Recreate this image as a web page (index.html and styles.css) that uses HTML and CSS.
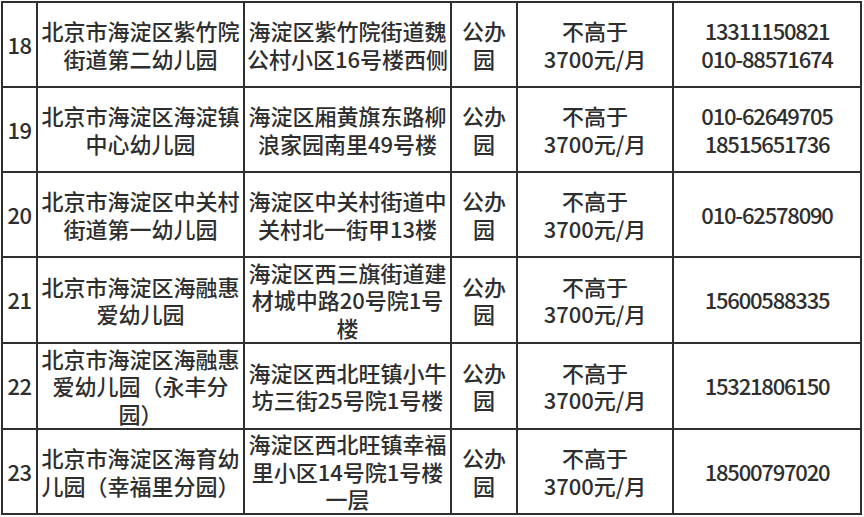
FILE: index.html
```html
<!DOCTYPE html>
<html lang="zh-CN">
<head>
<meta charset="utf-8">
<title>幼儿园列表</title>
<link rel="stylesheet" href="styles.css">
</head>
<body>
<table class="list">
  <colgroup>
    <col class="c-no">
    <col class="c-name">
    <col class="c-addr">
    <col class="c-type">
    <col class="c-fee">
    <col class="c-tel">
  </colgroup>
  <tbody>
    <tr class="r1">
      <td class="no">18</td>
      <td>北京市海淀区紫竹院<br>街道第二幼儿园</td>
      <td>海淀区紫竹院街道魏<br>公村小区16号楼西侧</td>
      <td>公办<br>园</td>
      <td>不高于<br>3700元/月</td>
      <td class="tel">13311150821<br>010-88571674</td>
    </tr>
    <tr class="r2">
      <td class="no">19</td>
      <td>北京市海淀区海淀镇<br>中心幼儿园</td>
      <td>海淀区厢黄旗东路柳<br>浪家园南里49号楼</td>
      <td>公办<br>园</td>
      <td>不高于<br>3700元/月</td>
      <td class="tel">010-62649705<br>18515651736</td>
    </tr>
    <tr class="r3">
      <td class="no">20</td>
      <td>北京市海淀区中关村<br>街道第一幼儿园</td>
      <td>海淀区中关村街道中<br>关村北一街甲13楼</td>
      <td>公办<br>园</td>
      <td>不高于<br>3700元/月</td>
      <td class="tel">010-62578090</td>
    </tr>
    <tr class="r4">
      <td class="no">21</td>
      <td>北京市海淀区海融惠<br>爱幼儿园</td>
      <td>海淀区西三旗街道建<br>材城中路20号院1号<br>楼</td>
      <td>公办<br>园</td>
      <td>不高于<br>3700元/月</td>
      <td class="tel">15600588335</td>
    </tr>
    <tr class="r5">
      <td class="no">22</td>
      <td>北京市海淀区海融惠<br>爱幼儿园（永丰分<br>园）</td>
      <td>海淀区西北旺镇小牛<br>坊三街25号院1号楼</td>
      <td>公办<br>园</td>
      <td>不高于<br>3700元/月</td>
      <td class="tel">15321806150</td>
    </tr>
    <tr class="r6">
      <td class="no">23</td>
      <td>北京市海淀区海育幼<br>儿园（幸福里分园）</td>
      <td>海淀区西北旺镇幸福<br>里小区14号院1号楼<br>一层</td>
      <td>公办<br>园</td>
      <td>不高于<br>3700元/月</td>
      <td class="tel">18500797020</td>
    </tr>
  </tbody>
</table>
</body>
</html>
```

FILE: styles.css
```css
html, body {
  margin: 0;
  padding: 0;
  background: #ffffff;
}

body {
  width: 864px;
  height: 517px;
  overflow: hidden;
}

.list {
  margin: 1px 0 0 1px;
  border-collapse: collapse;
  table-layout: fixed;
  width: 861px;
  font-family: "Noto Sans CJK SC", "Noto Sans", sans-serif;
  font-size: 22px;
  font-weight: 500;
  line-height: 27.5px;
  color: #2e2e2e;
}

.c-no { width: 35px; }
.c-name { width: 207px; }
.c-addr { width: 207px; }
.c-type { width: 66px; }
.c-fee { width: 156px; }
.c-tel { width: 188px; }

.list td {
  border: 2px solid #2f2f2f;
  padding: 0;
  text-align: center;
  vertical-align: middle;
  white-space: nowrap;
}

.list tr { height: 85px; }
.list tr.r4, .list tr.r5 { height: 86px; }

.list td.no {
  letter-spacing: -0.5px;
}

.list td.tel {
  letter-spacing: -1.2px;
}
```
